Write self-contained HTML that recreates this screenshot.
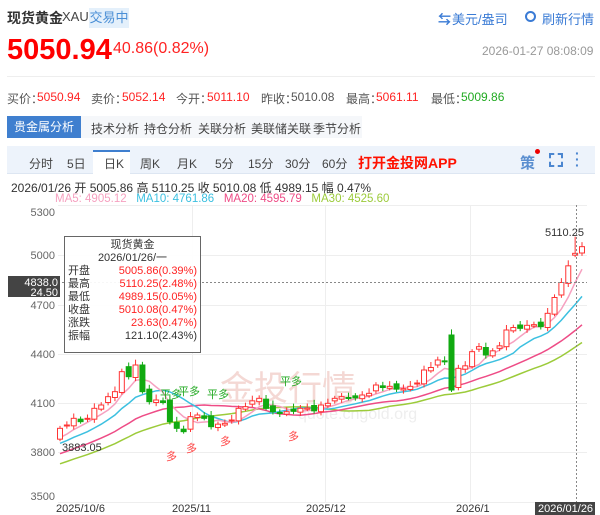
<!DOCTYPE html>
<html><head><meta charset="utf-8"><style>
*{margin:0;padding:0;box-sizing:border-box}
body{width:600px;height:515px;background:#fff;font-family:"Liberation Sans","Noto Sans CJK SC",sans-serif;position:relative;overflow:hidden;color:#333}
.a{position:absolute;white-space:nowrap}
.i{position:absolute;top:90px;font-size:12px;color:#555;white-space:nowrap}
.t{position:absolute;top:120px;font-size:12px;color:#444;white-space:nowrap}
.r,.i.r{color:#f22}
.g,.i.g{color:#2a2}
</style></head><body>
<div class="a" style="left:7px;top:8px;font-size:14px;font-weight:bold;color:#333">现货黄金</div>
<div class="a" style="left:62px;top:9px;font-size:13px;color:#444">XAU</div>
<div class="a" style="left:89px;top:8px;width:40px;height:20px;background:#e4f0fb;color:#4b8fd6;font-size:13px;line-height:20px;text-align:center">交易中</div>
<div class="a" style="left:438px;top:9px;font-size:13px;color:#3a7bd5;font-weight:bold">⇆</div>
<div class="a" style="left:452px;top:9px;font-size:13px;color:#3a7bd5">美元/盎司</div>
<div class="a" style="left:525px;top:11px;width:11px;height:11px;border:2px solid #3a7bd5;border-radius:50%"></div>
<div class="a" style="left:542px;top:9px;font-size:13px;color:#3a7bd5">刷新行情</div>
<div class="a r" style="left:7px;top:34px;font-size:29px;font-weight:bold;color:#f00">5050.94</div>
<div class="a r" style="left:113px;top:40px;font-size:16px">40.86(0.82%)</div>
<div class="a" style="left:482px;top:44px;font-size:12px;color:#999">2026-01-27 08:08:09</div>
<div class="a" style="left:7px;top:76px;width:588px;height:1px;background:#eee"></div>
<div class="i" style="left:7px">买价：</div><div class="i r" style="left:37px">5050.94</div>
<div class="i" style="left:91px">卖价：</div><div class="i r" style="left:122px">5052.14</div>
<div class="i" style="left:176px">今开：</div><div class="i r" style="left:207px">5011.10</div>
<div class="i" style="left:261px">昨收：</div><div class="i" style="left:291px">5010.08</div>
<div class="i" style="left:346px">最高：</div><div class="i r" style="left:376px">5061.11</div>
<div class="i" style="left:431px">最低：</div><div class="i g" style="left:461px">5009.86</div>
<div class="a" style="left:7px;top:116px;width:355px;height:22px;background:#f5f7fa"></div>
<div class="a" style="left:7px;top:116px;width:74px;height:22px;background:#3f7fcf;color:#fff;font-size:12px;line-height:22px;text-align:center">贵金属分析</div>
<div class="t" style="left:91px">技术分析</div>
<div class="t" style="left:144px">持仓分析</div>
<div class="t" style="left:198px">关联分析</div>
<div class="t" style="left:251px">美联储关联</div>
<div class="t" style="left:313px">季节分析</div>
<div class="a" style="left:7px;top:146px;width:588px;height:28px;background:#edf3fb;border-bottom:1px solid #dde6f2"></div>
<div class="a" style="left:93px;top:150px;width:37px;height:24px;background:#fff;border-top:2px solid #3f7fcf"></div>
<div class="a" style="top:155px;left:0;font-size:12px;color:#444;width:600px">
<span class="a" style="left:29px">分时</span><span class="a" style="left:67px">5日</span><span class="a" style="left:104px">日K</span><span class="a" style="left:140px">周K</span><span class="a" style="left:177px">月K</span><span class="a" style="left:215px">5分</span><span class="a" style="left:248px">15分</span><span class="a" style="left:285px">30分</span><span class="a" style="left:322px">60分</span></div>
<div class="a" style="left:358px;top:153px;font-size:14px;font-weight:bold;color:#f10">打开金投网APP</div>
<div class="a" style="left:520px;top:152px;font-size:15px;color:#5b8fd0;font-weight:bold">策</div>
<div class="a" style="left:535px;top:149px;width:5px;height:5px;border-radius:50%;background:#e00"></div>
<div class="a" style="left:549px;top:153px;width:14px;height:14px;border:2px dashed #4b86d0"></div>
<div class="a" style="left:575px;top:150px;width:4px;font-size:14px;color:#4b86d0;font-weight:bold;line-height:6px">·<br>·<br>·</div>
<div class="a" style="left:11px;top:179px;font-size:12px;color:#333">2026/01/26 开 5005.86 高 5110.25 收 5010.08 低 4989.15 幅 0.47%</div>
<div class="a" style="left:55px;top:193px;font-size:11.5px;"><span style="color:#f6a1c0">MA5: 4905.12</span>&nbsp;&nbsp; <span style="color:#3cc0e0">MA10: 4761.86</span>&nbsp;&nbsp; <span style="color:#ee4c86">MA20: 4595.79</span>&nbsp;&nbsp; <span style="color:#9ccb3a">MA30: 4525.60</span></div>
<svg class="a" style="left:0;top:0" width="600" height="515" id="ch">
<g stroke="#eee" stroke-width="1">
<line x1="58" y1="205.5" x2="587" y2="205.5"/><line x1="58" y1="255.5" x2="587" y2="255.5"/><line x1="58" y1="305.5" x2="587" y2="305.5"/><line x1="58" y1="354.5" x2="587" y2="354.5"/><line x1="58" y1="403.5" x2="587" y2="403.5"/><line x1="58" y1="452.5" x2="587" y2="452.5"/><line x1="58" y1="502.5" x2="587" y2="502.5"/>
<line x1="192.5" y1="205" x2="192.5" y2="502"/><line x1="325.5" y1="205" x2="325.5" y2="502"/><line x1="470.5" y1="205" x2="470.5" y2="502"/>
</g>
<g font-size="11" fill="#666" text-anchor="end" font-family="Liberation Sans,sans-serif">
<text x="55" y="216">5300</text><text x="55" y="259">5000</text><text x="55" y="309">4700</text><text x="55" y="358">4400</text><text x="55" y="407">4100</text><text x="55" y="456">3800</text><text x="55" y="500">3500</text>
</g>
<text x="220" y="400" font-size="34" fill="#f4d8d4" font-family="Noto Sans CJK SC,sans-serif">金投行情</text>
<text x="298" y="419" font-size="16" fill="#eee" font-family="Liberation Sans,sans-serif">quote.cngold.org</text>
<g id="cd"></g>
<line x1="58" y1="282.5" x2="587" y2="282.5" stroke="#888" stroke-dasharray="2,2"/>
<line x1="576.5" y1="205" x2="576.5" y2="505" stroke="#888" stroke-dasharray="2,2"/>
<text x="545" y="236" font-size="11" fill="#333" font-family="Liberation Sans,sans-serif">5110.25</text>
<text x="62" y="451" font-size="11" fill="#333" font-family="Liberation Sans,sans-serif">3883.05</text>
<g font-size="11" fill="#2a2" font-family="Noto Sans CJK SC,sans-serif"><text x="160" y="398">平多</text><text x="178" y="395">平多</text><text x="207" y="398">平多</text><text x="280" y="385">平多</text></g>
<g font-size="11" fill="#f44" font-family="Noto Sans CJK SC,sans-serif"><text x="166" y="460">多</text><text x="186" y="452">多</text><text x="220" y="445">多</text><text x="288" y="440">多</text></g>
<rect x="8" y="276" width="52" height="21" fill="#444"/>
<text x="58" y="286" font-size="11" fill="#fff" text-anchor="end" font-family="Liberation Sans,sans-serif">4838.0</text>
<text x="58" y="296" font-size="11" fill="#fff" text-anchor="end" font-family="Liberation Sans,sans-serif">24.50</text>
<text x="56" y="512" font-size="11" fill="#333" font-family="Liberation Sans,sans-serif">2025/10/6</text>
<text x="172" y="512" font-size="11" fill="#333" font-family="Liberation Sans,sans-serif">2025/11</text>
<text x="306" y="512" font-size="11" fill="#333" font-family="Liberation Sans,sans-serif">2025/12</text>
<text x="456" y="512" font-size="11" fill="#333" font-family="Liberation Sans,sans-serif">2026/1</text>
<rect x="535" y="502" width="60" height="13" fill="#444"/>
<text x="538" y="512" font-size="11" fill="#fff" font-family="Liberation Sans,sans-serif">2026/01/26</text>
</svg>
<div class="a" style="left:64px;top:236px;width:137px;height:117px;background:rgba(255,255,255,.93);border:1px solid #666;font-size:11px;line-height:13px;padding:2px 3px;font-family:'Liberation Sans','Noto Sans CJK SC',sans-serif">
<div style="text-align:center">现货黄金</div><div style="text-align:center">2026/01/26/一</div>
<div>开盘<span class="r" style="float:right">5005.86(0.39%)</span></div>
<div>最高<span class="r" style="float:right">5110.25(2.48%)</span></div>
<div>最低<span class="r" style="float:right">4989.15(0.05%)</span></div>
<div>收盘<span class="r" style="float:right">5010.08(0.47%)</span></div>
<div>涨跌<span class="r" style="float:right">23.63(0.47%)</span></div>
<div>振幅<span style="float:right">121.10(2.43%)</span></div>
</div>
<script>
var C=[3960,3980,4020,4000,4020,4080,4100,4150,4180,4300,4270,4340,4180,4120,4130,4115,4000,3960,3940,4030,4040,4020,3970,3985,3990,4010,4080,4090,4125,4140,4080,4060,4050,4060,4062,4080,4082,4065,4100,4110,4140,4150,4140,4143,4160,4170,4220,4205,4212,4195,4198,4212,4232,4310,4325,4370,4362,4190,4320,4335,4420,4450,4400,4425,4455,4550,4565,4560,4578,4582,4570,4650,4745,4835,4935,5010,5050];
var pad=[];for(var i=0;i<30;i++)pad.push(3560+i*12);
var all=pad.concat(C);
function y(p){return 255+(5000-p)/6}
var N=C.length,x0=60,dx=(582-60)/(N-1),s='';
var prev=3900;
for(var i=0;i<N;i++){var c=C[i],o=prev+(i%3==1?15:-5);if(i==10)o=4330;if(i==12)o=4340;if(i==57)o=4520;if(i==75)o=4999;if(i==76)o=5012;
var up=c>=o,hi=Math.max(o,c)+15+(i*7%20),lo=Math.min(o,c)-12-(i*5%15);if(i==75)hi=5110;
var col=up?'#f33':'#1a1',x=x0+i*dx,t=y(Math.max(o,c)),b=y(Math.min(o,c));
s+='<line x1="'+x+'" x2="'+x+'" y1="'+y(hi)+'" y2="'+y(lo)+'" stroke="'+col+'"/>';
s+='<rect x="'+(x-2.5)+'" y="'+t+'" width="5" height="'+Math.max(1,b-t)+'" fill="'+(up?'#fff':col)+'" stroke="'+col+'"/>';prev=c;}
function ma(n,col){var d='';for(var i=0;i<N;i++){var k=i+30,sm=0;for(var j=0;j<n;j++)sm+=all[k-j];d+=(i?'L':'M')+(x0+i*dx)+' '+y(sm/n);}return '<path d="'+d+'" fill="none" stroke="'+col+'" stroke-width="1.5"/>'}
s=ma(30,'#9ccb3a')+ma(20,'#ee4c86')+ma(10,'#3cc0e0')+ma(5,'#f6a1c0')+s;
document.getElementById('cd').innerHTML=s;
</script>
</body></html>
